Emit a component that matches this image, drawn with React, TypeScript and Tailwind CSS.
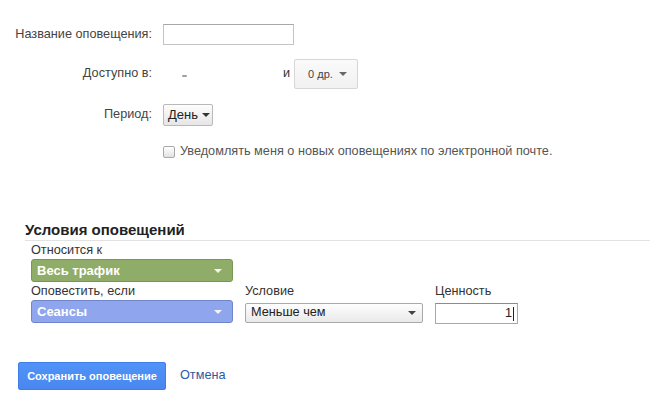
const Caret = ({ color = "#444" }: { color?: string }) => (
  <svg width="8" height="4" viewBox="0 0 8 4" className="shrink-0">
    <path d="M0 0h8L4 4z" fill={color} />
  </svg>
);

export default function App() {
  return (
    <main className="min-h-[401px] w-[650px] bg-white pt-[24px] font-['Liberation_Sans',Arial,sans-serif] text-[12.7px] text-[#444]">
      {/* top form */}
      <div className="flex h-[21px] items-center">
        <label className="mr-[11px] w-[152px] text-right">Название оповещения:</label>
        <input className="h-[21px] w-[131px] border border-[#c4c4c4] border-t-[#a8a8a8] bg-white outline-none" />
      </div>
      <div className="mt-[14px] flex h-[30px] items-center">
        <label className="mr-[11px] w-[152px] text-right">Доступно в:</label>
        <div className="w-[120px]">
          <span className="ml-[19px] inline-block h-[2px] w-[5px] rounded-full bg-[#777] opacity-70" />
        </div>
        <span className="mr-[4px] text-[#333]">и</span>
        <button className="flex h-[30px] w-[64px] items-center justify-between rounded-[2px] border border-[#d6d6d6] bg-gradient-to-b from-[#fafafa] to-[#f1f1f1] pl-[13px] pr-[10px] text-[11px] text-[#444]">
          <span>0 др.</span>
          <Caret color="#666" />
        </button>
      </div>
      <div className="mt-[15px] flex h-[22px] items-center">
        <label className="mr-[11px] w-[152px] text-right">Период:</label>
        <button className="flex h-[22px] w-[50px] items-center gap-[4px] rounded-[2px] border border-[#b9b9b9] bg-gradient-to-b from-[#fdfdfd] to-[#e6e6e6] pl-[4px] text-[13px] text-[#222]">
          <span>День</span>
          <Caret color="#333" />
        </button>
      </div>
      <div className="mt-[19px] flex h-[14px] items-center">
        <div className="ml-[163px] mr-[5px] h-[12px] w-[12px] rounded-[2px] border border-[#a9a9a9] bg-gradient-to-b from-[#fff] to-[#e2e2e2]" />
        <span className="text-[#555]">Уведомлять меня о новых оповещениях по электронной почте.</span>
      </div>

      {/* conditions */}
      <section className="mt-[60px] ml-[25px]">
        <h2 className="h-[22px] border-b border-[#e2e2e2] text-[15px] font-bold leading-[21px] text-[#222]">
          Условия оповещений
        </h2>
        <div className="ml-[6px]">
          <div className="h-[18px] pt-[1px] leading-[17px] text-[#333]">Относится к</div>
          <div className="flex h-[23px] w-[202px] items-center justify-between rounded-[3px] border border-[#78964f] bg-[#8fad68] pl-[5px] pr-[10px] text-[13px] font-bold text-white">
            <span>Весь трафик</span>
            <Caret color="#f4f4f4" />
          </div>
          <div className="flex gap-[12px]">
            <div className="flex w-[202px] flex-col">
              <div className="h-[18px] leading-[18px] text-[#333]">Оповестить, если</div>
              <div className="flex h-[23px] items-center justify-between rounded-[3px] border border-[#7186c8] bg-[#8fa6ee] pl-[5px] pr-[10px] text-[13px] font-bold text-white">
                <span>Сеансы</span>
                <Caret color="#f4f4f4" />
              </div>
            </div>
            <div className="flex w-[178px] flex-col">
              <div className="h-[18px] leading-[18px] text-[#333]">Условие</div>
              <div className="mt-[3px] flex h-[20px] items-center justify-between rounded-[2px] border border-[#a9a9a9] bg-gradient-to-b from-[#fefefe] to-[#e9e9e9] pl-[5px] pr-[6px] text-[#222]">
                <span>Меньше чем</span>
                <Caret color="#444" />
              </div>
            </div>
            <div className="flex w-[83px] flex-col">
              <div className="h-[18px] leading-[18px] text-[#333]">Ценность</div>
              <div className="mt-[3px] flex h-[21px] items-center justify-end border border-[#a9a9a9] border-t-[#8c8c8c] bg-white pr-[3px] text-[#222]">
                <span>1</span>
                <span className="ml-[1px] h-[14px] w-[1px] bg-[#222]" />
              </div>
            </div>
          </div>
        </div>
      </section>

      {/* actions */}
      <div className="mt-[38px] ml-[18px] flex items-center">
        <button className="h-[28px] w-[148px] rounded-[2px] border border-[#3f7fe8] bg-gradient-to-b from-[#5193f8] to-[#4887ef] text-[11px] font-bold text-white">
          Сохранить оповещение
        </button>
        <a className="ml-[14px] text-[12.7px] text-[#2b5aa5]">Отмена</a>
      </div>
    </main>
  );
}
